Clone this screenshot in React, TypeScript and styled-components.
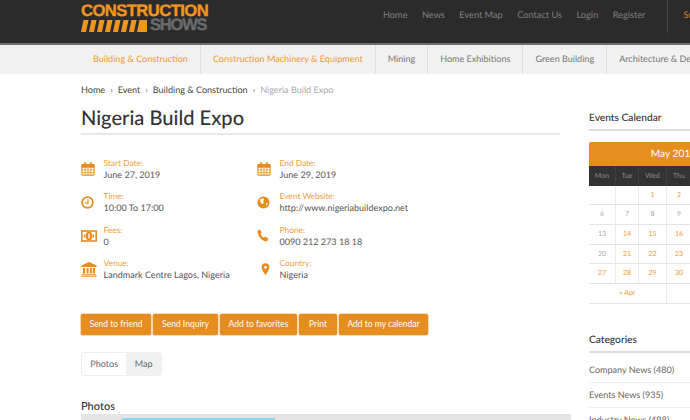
import React from "react";
import styled, { createGlobalStyle } from "styled-components";

const orange = "#e68d20";
const Global = createGlobalStyle`
  html, body { margin: 0; padding: 0; width: 690px; height: 420px; overflow: hidden; background: #fff; }
  body { font-family: Lato, "Open Sans", sans-serif; color: #444; text-rendering: geometricPrecision; }
  * { box-sizing: border-box; }
`;
const Page = styled.div`width: 690px; height: 420px; overflow: hidden;`;
const TopBar = styled.header`
  height: 45px; width: 690px; background: #2b2b2b; border-bottom: 2px solid #6e6e6e;
  display: flex; padding: 0 0 0 81px;
`;
const Logo = styled.div`
  width: 128px; flex: none; padding-top: 4px; display: flex; flex-direction: column;
  font-family: "Liberation Sans", Arial, sans-serif; font-weight: 700;
`;
const LogoTop = styled.div`color: #f0951d; font-size: 16.6px; letter-spacing: -0.55px; height: 14px; line-height: 14px; white-space: nowrap; -webkit-text-stroke: .4px #f0951d;`;
const LogoBottom = styled.div`display: flex; align-items: center; height: 13px; margin-top: 1px;`;
const LogoShows = styled.span`color: #6b6b6b; font-size: 16.4px; letter-spacing: -1.1px; margin-left: 3px; line-height: 13px; -webkit-text-stroke: .4px #6b6b6b;`;
const TopNav = styled.nav`
  display: flex; gap: 14.5px; margin-left: 174px; padding-top: 8px; font-size: 9.2px; line-height: 14px; color: #808080; white-space: nowrap;
`;
const Subscribe = styled.div`
  margin-left: 22px; height: 33px; border-left: 1px solid #444; padding: 8px 0 0 15px; font-size: 9.2px; line-height: 14px; color: #c9801f; white-space: nowrap;
`;
const CatBar = styled.nav`
  height: 29px; background: #f1f1f1; display: flex; padding-left: 81px; white-space: nowrap; overflow: hidden;
`;
const CatItem = styled.div<{ $on?: boolean }>`
  padding: 0 12px; border-right: 1px solid #dedede; font-size: 9.05px; line-height: 28px; flex: none;
  color: ${p => (p.$on ? "#f09a30" : "#777")};
`;
const Body = styled.div`display: flex; padding-left: 81px; width: 790px;`;
const Main = styled.main`width: 490px; flex: none;`;
const Crumbs = styled.div`
  display: flex; align-items: center; margin-top: 9px; height: 14px; font-size: 9.05px; line-height: 14px; color: #444; white-space: nowrap;
`;
const Sep = styled.span`margin: 0 5px; color: #777; font-size: 9px;`;
const CrumbNow = styled.span`color: #aaa;`;
const Title = styled.h1`
  margin: 9px 0 0; width: 479px; height: 29px; font-size: 20.1px; line-height: 24px; font-weight: 500; color: #333; border-bottom: 2px solid #e6e9ec;
`;
const InfoGrid = styled.div`
  display: grid; grid-template-columns: 176px 240px; grid-auto-rows: 33.4px; margin-top: 23px;
`;
const Info = styled.div`display: flex; align-items: flex-start;`;
const IconWrap = styled.div`width: 22.5px; height: 22px; flex: none; display: flex; align-items: center; color: ${orange};`;
const InfoText = styled.div`display: flex; flex-direction: column;`;
const InfoLabel = styled.div`font-size: 8.4px; line-height: 11px; color: #f0a040;`;
const InfoValue = styled.div`font-size: 9.05px; line-height: 13px; margin-top: -1px; color: #555; white-space: nowrap;`;
const Buttons = styled.div`display: flex; gap: 2px; margin-top: 22px;`;
const Btn = styled.button<{ $w: number }>`
  width: ${p => p.$w}px; height: 21px; padding: 0; border: none; border-radius: 2px; background: ${orange}; color: #fff;
  font-family: inherit; font-size: 8.5px; line-height: 21px; box-shadow: 0 0 0 .5px #f2b36a; white-space: nowrap;
`;
const Tabs = styled.div`display: flex; margin-top: 17px; height: 24px; border-radius: 3px; border: 1px solid #eee; width: 81px; overflow: hidden;`;
const Tab = styled.div<{ $on?: boolean }>`
  flex: auto; text-align: center; font-size: 9.05px; line-height: 22px; color: #666; background: ${p => (p.$on ? "#f1f1f1" : "#fff")};
`;
const PhotosTitle = styled.h3`margin: 24px 0 0; font-size: 11px; line-height: 13px; font-weight: 500; color: #333;`;
const PhotoStage = styled.div`
  width: 490px; height: 20px; margin-top: 1px; background: #e4e4e4; padding: 4px 0 0 41px;
`;
const PhotoInner = styled.div`width: 153px; height: 6px; background: #86dcf2;`;
const Side = styled.aside`margin-left: 18px; width: 180px; flex: none;`;
const SideTitle = styled.h4`
  margin: 37px 0 0; height: 20px; font-size: 10.2px; line-height: 14px; font-weight: 500; color: #333; border-bottom: 2px solid #dedede;
`;
const CalHead = styled.div`
  margin-top: 11px; height: 24px; width: 169px; background: ${orange}; color: #fff; font-size: 10.2px; line-height: 24px; text-align: center; border-radius: 2px 2px 0 0;
`;
const CalGrid = styled.div`
  display: grid; grid-template-columns: 27px 23px 28px 25px 22px 22px 22px; grid-auto-rows: 19.7px;
`;
const CalDow = styled.div`
  background: #333; color: #8a8a8a; font-size: 7px; line-height: 20px; text-align: center; border-right: 1px solid #3f3f3f;
`;
const CalDay = styled.div<{ $link?: boolean; $span?: number }>`
  font-size: 7px; line-height: 19px; text-align: center; border-right: 1px solid #eaeaea; border-bottom: 1px solid #e4e4e4;
  color: ${p => (p.$link ? "#f09a30" : "#aaa")}; grid-column: ${p => (p.$span ? `span ${p.$span}` : "auto")};
`;
const SideTitle2 = styled(SideTitle)`margin-top: 29px;`;
const CatList = styled.ul`list-style: none; margin: 0; padding: 5px 0 0;`;
const CatLi = styled.li`height: 25.3px; font-size: 9.05px; line-height: 24px; color: #666; border-bottom: 1px solid #eee; white-space: nowrap;`;

const Cal = () => (
  <svg width="14" height="14" viewBox="0 0 16 16" fill="none" stroke="currentColor">
    <rect x="1" y="3" width="14" height="12" rx="1.2" strokeWidth="1.2" />
    <path d="M1 3h14v3H1z" fill="currentColor" />
    <path d="M4.7 1v3M11.3 1v3" strokeWidth="2" strokeLinecap="round" />
    <path d="M1 9h14M1 12h14M4.800 6v9M8 6v9M11.200 6v9" strokeWidth=".8" />
  </svg>
);
const Clock = () => (
  <svg width="13" height="13" viewBox="0 0 15 15" fill="none" stroke="currentColor">
    <circle cx="7.5" cy="7.5" r="6.200" strokeWidth="2" />
    <path d="M8 3.800V8.300H4.600" strokeWidth="1.500" />
  </svg>
);
const Money = () => (
  <svg width="16" height="12" viewBox="0 0 16 12">
    <rect x=".8" y="1" width="14.400" height="10" fill="none" stroke="currentColor" strokeWidth="1.600" />
    <ellipse cx="8" cy="6" rx="3.400" ry="4.200" fill="currentColor" />
    <path d="M2.800 4.500h1.500v3H2.800zM11.700 4.500h1.500v3h-1.500z" fill="currentColor" />
    <path d="M7.300 3.800h1.400v4.400H7.300z" fill="#fff" />
  </svg>
);
const Bank = () => (
  <svg width="16" height="15" viewBox="0 0 16 15" fill="currentColor">
    <path d="M8 0 .5 3.500V5h15V3.500zM2 6h2.200v5.500H2zM5.600 6h2v5.500h-2zM8.900 6h2v5.500h-2zM11.900 6H14v5.500h-2.100zM1 12.200h14v1H1zM.3 13.700h15.400v1H.3z" />
  </svg>
);
const Globe = () => (
  <svg width="13" height="13" viewBox="0 0 14 14">
    <circle cx="7" cy="7" r="6.500" fill="currentColor" />
    <path d="M3 3.600 6.200 2.400 7.800 3.800 6.500 5.600 7.700 6.600 6 9 4.600 8 3.600 6zM9.500 7.700l2.400.3-1.900 2.700z" fill="#fff" />
  </svg>
);
const Phone = () => (
  <svg width="12" height="13" viewBox="0 0 13 14" fill="currentColor">
    <path d="M1 1.500 3.200.6l2 3.300-1.400 1.300c.5 1.600 1.800 3.300 3.500 4.200L9 8l3.300 2.400-1 2.400c-.4.7-1.400.9-2.200.6C4.600 12 1 7.600.7 3.200.6 2.400.6 1.900 1 1.500z" />
  </svg>
);
const PinSvg = styled.svg`margin-left: 4px;`;
const Pin = () => (
  <PinSvg width="9" height="13" viewBox="0 0 11 15" fill="currentColor">
    <path fillRule="evenodd" d="M5.500 0A4.700 4.700 0 0 0 .8 4.800C.8 8 5.500 14.500 5.500 14.500S10.200 8 10.200 4.800A4.700 4.700 0 0 0 5.500 0zm0 3.200a1.700 1.700 0 1 1 0 3.400 1.700 1.700 0 0 1 0-3.400z" />
  </PinSvg>
);
const Stripes = () => (
  <svg width="66" height="12" viewBox="0 0 66 12" fill="#f0951d">
    {[0, 1, 2, 3, 4, 5, 6, 7].map(i => (
      <path key={i} d={`M${2.5 + i * 8} 0h${i === 7 ? 10.5 : 5}l-2.500 12h-${i === 7 ? 10.5 : 5}z`} />
    ))}
  </svg>
);

const details = [
  { icon: <Cal />, label: "Start Date:", value: "June 27, 2019" },
  { icon: <Cal />, label: "End Date:", value: "June 29, 2019" },
  { icon: <Clock />, label: "Time:", value: "10:00 To 17:00" },
  { icon: <Globe />, label: "Event Website:", value: "http://www.nigeriabuildexpo.net" },
  { icon: <Money />, label: "Fees:", value: "0" },
  { icon: <Phone />, label: "Phone:", value: "0090 212 273 18 18" },
  { icon: <Bank />, label: "Venue:", value: "Landmark Centre Lagos, Nigeria" },
  { icon: <Pin />, label: "Country:", value: "Nigeria" },
];

const days: (number | null)[] = [null, null, 1, 2, 3, 4, 5, 6, 7, 8, 9, 10, 11, 12, 13, 14, 15, 16, 17, 18, 19, 20, 21, 22, 23, 24, 25, 26, 27, 28, 29, 30, 31, null, null];
const plain = new Set([6, 7, 8, 9, 10, 11, 12, 13, 20]);

export default function App() {
  return (
    <Page>
      <Global />
      <TopBar>
        <Logo>
          <LogoTop>CONSTRUCTION</LogoTop>
          <LogoBottom><Stripes /><LogoShows>SHOWS</LogoShows></LogoBottom>
        </Logo>
        <TopNav>
          <span>Home</span><span>News</span><span>Event Map</span><span>Contact Us</span><span>Login</span><span>Register</span>
        </TopNav>
        <Subscribe>Subscribe</Subscribe>
      </TopBar>
      <CatBar>
        <CatItem $on>Building &amp; Construction</CatItem>
        <CatItem $on>Construction Machinery &amp; Equipment</CatItem>
        <CatItem>Mining</CatItem>
        <CatItem>Home Exhibitions</CatItem>
        <CatItem>Green Building</CatItem>
        <CatItem>Architecture &amp; Design</CatItem>
      </CatBar>
      <Body>
        <Main>
          <Crumbs>
            <span>Home</span><Sep>›</Sep><span>Event</span><Sep>›</Sep><span>Building &amp; Construction</span><Sep>›</Sep><CrumbNow>Nigeria Build Expo</CrumbNow>
          </Crumbs>
          <Title>Nigeria Build Expo</Title>
          <InfoGrid>
            {details.map(d => (
              <Info key={d.label}>
                <IconWrap>{d.icon}</IconWrap>
                <InfoText>
                  <InfoLabel>{d.label}</InfoLabel>
                  <InfoValue>{d.value}</InfoValue>
                </InfoText>
              </Info>
            ))}
          </InfoGrid>
          <Buttons>
            <Btn $w={70}>Send to friend</Btn><Btn $w={65}>Send Inquiry</Btn><Btn $w={77}>Add to favorites</Btn><Btn $w={38}>Print</Btn><Btn $w={89}>Add to my calendar</Btn>
          </Buttons>
          <Tabs><Tab>Photos</Tab><Tab $on>Map</Tab></Tabs>
          <PhotosTitle>Photos</PhotosTitle>
          <PhotoStage><PhotoInner /></PhotoStage>
        </Main>
        <Side>
          <SideTitle>Events Calendar</SideTitle>
          <CalHead>May 2019</CalHead>
          <CalGrid>
            {["Mon", "Tue", "Wed", "Thu", "Fri", "Sat", "Sun"].map(d => <CalDow key={d}>{d}</CalDow>)}
            {days.map((d, i) => <CalDay key={i} $link={d !== null && !plain.has(d)}>{d}</CalDay>)}
            <CalDay $span={3} $link>« Apr</CalDay>
            <CalDay $span={4} />
          </CalGrid>
          <SideTitle2>Categories</SideTitle2>
          <CatList>
            <CatLi>Company News (480)</CatLi>
            <CatLi>Events News (935)</CatLi>
            <CatLi>Industry News (498)</CatLi>
          </CatList>
        </Side>
      </Body>
    </Page>
  );
}
